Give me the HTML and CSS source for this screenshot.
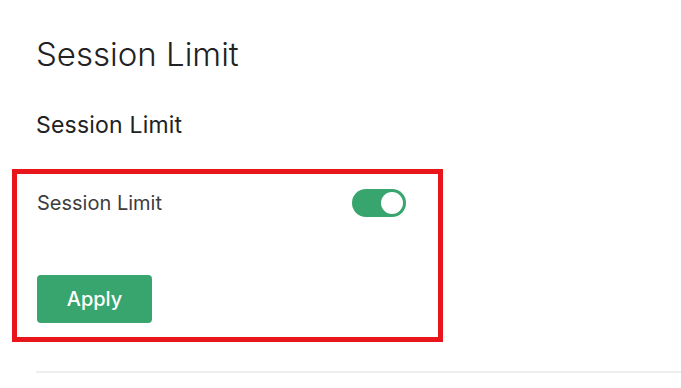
FILE: index.html
```html
<!DOCTYPE html>
<html>
   <head>
      <meta charset="utf-8">
      <title>Session Limit</title>
      <link rel="stylesheet" href="styles.css">
   </head>
   <body>
      <div class="page">
         <h1 class="title">Session Limit</h1>
         <h2 class="subtitle">Session Limit</h2>
         <div class="panel">
            <div class="row">
               <span class="label">Session Limit</span>
               <span class="toggle on"><span class="knob"></span></span>
            </div>
            <button class="apply" type="button">Apply</button>
         </div>
         <div class="divider"></div>
      </div>
   </body>
</html>
```
FILE: styles.css
```css
body{
margin: 0;
background-color: #ffffff;
font-family: Inter, "Noto Sans", sans-serif;
color: #222222;
}
.page{
padding: 34px 0 0 36px;
}
.title{
margin: 0;
font-size: 33px;
font-weight: 300;
line-height: 40px;
letter-spacing: 0;
}
.subtitle{
margin: 37px 0 0 0;
font-size: 23px;
font-weight: 400;
line-height: 28px;
letter-spacing: 0.2px;
}
.panel{
box-sizing: border-box;
margin: 30px 0 0 -24px;
width: 431px;
height: 173px;
border: 5px solid #e8161b;
padding: 15px 0 0 20px;
}
.row{
display: flex;
align-items: center;
justify-content: space-between;
width: 369px;
}
.label{
font-size: 20px;
color: #3d3d3d;
letter-spacing: 0;
}
.toggle{
box-sizing: border-box;
display: flex;
justify-content: flex-end;
align-items: center;
width: 54px;
height: 28px;
padding: 0 3px;
border-radius: 14px;
background-color: #37a56d;
}
.knob{
width: 22px;
height: 22px;
border-radius: 50%;
background-color: #ffffff;
}
.apply{
display: block;
margin-top: 58px;
width: 115px;
height: 48px;
border: none;
border-radius: 4px;
background-color: #37a56d;
color: #ffffff;
font-family: Inter, "Noto Sans", sans-serif;
font-size: 20px;
font-weight: 500;
}
.divider{
margin-top: 29px;
height: 2px;
background-color: #eeeeee;
}
```
